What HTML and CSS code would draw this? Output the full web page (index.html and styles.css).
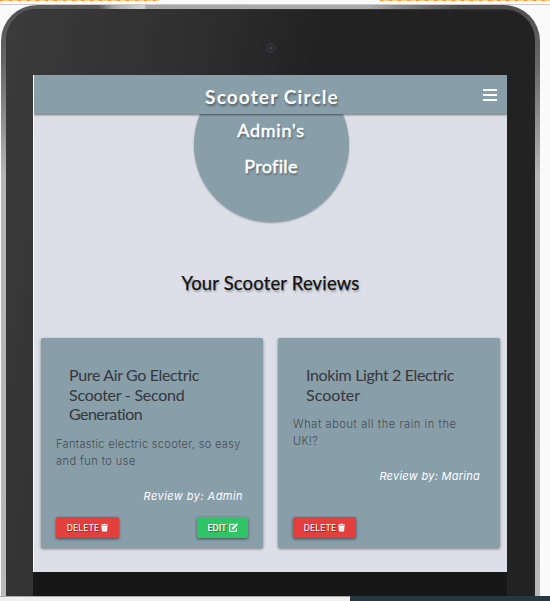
FILE: index.html
```html
<!DOCTYPE html>
<html lang="en">
<head>
<meta charset="utf-8">
<title>Scooter Circle</title>
<link rel="stylesheet" href="styles.css">
</head>
<body>
<div class="strip"><span class="dashes dashes-left"></span><span class="dashes dashes-right"></span></div>
<main class="stage">
  <div class="tablet">
    <div class="bezel">
      <div class="camera-row"><span class="camera"></span></div>
      <div class="screen">
        <header class="navbar">
          <h1 class="brand">Scooter Circle</h1>
          <svg class="menu" viewBox="0 0 14 12"><path d="M0 1h14M0 6h14M0 11h14" stroke="#fff" stroke-width="2"/></svg>
        </header>
        <div class="profile-wrap">
          <div class="profile"><span class="p1">Admin's</span><span class="p2">Profile</span></div>
        </div>
        <h2 class="heading">Your Scooter Reviews</h2>
        <section class="cards">
          <article class="card">
            <h3 class="title"><span class="t1">Pure Air Go Electric</span><br><span class="t2">Scooter - Second</span><br><span class="t3">Generation</span></h3>
            <p class="text"><span class="x1">Fantastic electric scooter, so easy</span><br><span class="x2">and fun to use</span></p>
            <p class="author a1">Review by: Admin</p>
            <div class="actions">
              <button class="btn delete"><span>DELETE</span><svg class="trash" viewBox="0 0 8 9"><path d="M0 1h2.4L3 .2h2l.6.8H8v1.2H0zM.6 2.7h6.8L7 8.2q0 .8-.8.8H1.8Q1 9 1 8.2z" fill="#fff"/><path d="M2.5 3.7v4M4 3.7v4M5.5 3.7v4" stroke="#e5a29f" stroke-width=".4"/></svg></button>
              <button class="btn edit"><span>EDIT</span><svg class="pen" viewBox="0 0 9 9"><path d="M5.2 1.3H1.3q-.7 0-.7.7v5.6q0 .7.7.7h5.4q.7 0 .7-.7V5.4" fill="none" stroke="#fff" stroke-width="1.2"/><path d="M2.7 6.6l.3-1.9L7.3.4q.4-.3.8 0l.6.6q.4.4 0 .8L4.5 6.2z" fill="#fff"/></svg></button>
            </div>
          </article>
          <article class="card">
            <h3 class="title"><span class="t4">Inokim Light 2 Electric</span><br><span class="t5">Scooter</span></h3>
            <p class="text"><span class="x3">What about all the rain in the</span><br><span class="x4">UK!?</span></p>
            <p class="author a2">Review by: Marina</p>
            <div class="actions">
              <button class="btn delete"><span>DELETE</span><svg class="trash" viewBox="0 0 8 9"><path d="M0 1h2.4L3 .2h2l.6.8H8v1.2H0zM.6 2.7h6.8L7 8.2q0 .8-.8.8H1.8Q1 9 1 8.2z" fill="#fff"/><path d="M2.5 3.7v4M4 3.7v4M5.5 3.7v4" stroke="#e5a29f" stroke-width=".4"/></svg></button>
            </div>
          </article>
        </section>
      </div>
      <div class="below"></div>
    </div>
  </div>
</main>
<footer class="bottom"><span class="bottom-light"></span><span class="bottom-dark"></span></footer>
</body>
</html>
```
FILE: styles.css
```css
* { box-sizing: border-box; }
body { margin: 0; width: 550px; height: 601px; overflow: hidden; display: flex; flex-direction: column; background: #fafafa; font-family: Lato, "Liberation Sans", sans-serif; font-variant-ligatures: none; }
h1, h2, h3, p { margin: 0; font-weight: 400; }
.strip { height: 5px; flex: none; display: flex; justify-content: space-between; border-bottom: 1px solid #c8c8c8; }
.dashes { height: 1px; background: repeating-linear-gradient(90deg, #ff8c32 0 3px, #ffcf8c 3px 9px); }
.dashes-left { width: 159px; }
.dashes-right { width: 170px; }
.stage { height: 591px; flex: none; overflow: hidden; padding-left: 1px; }
.tablet { width: 539px; height: 640px; padding: 4px 5px 0; border-radius: 36px 36px 0 0; background: linear-gradient(90deg, #5b5b5b 0 18%, #a8a8a8 21%, #d5d5d5 26.5%, #a8a8a8 27%, #aaa 68%, #505050 85%) top / 100% 5px no-repeat, linear-gradient(#505050, #686868 60px, #b5b5b5 170px, #b9b9b9); }
.bezel { height: 636px; padding: 0 27px 0 27px; border-radius: 31px 31px 0 0; border-top: 1px solid #333; background: linear-gradient(100deg, #3b3b3b, #303030 28%, #222 50%, #222); }
.camera-row { height: 65px; display: flex; justify-content: center; padding: 33px 0 0 1px; }
.camera { width: 10px; height: 10px; border-radius: 50%; border: 2px solid #34323b; background: radial-gradient(#454155 0 1px, #25252a 2px); }
.screen { width: 474px; height: 497px; overflow: hidden; background: #dcdfe7; border-left: 1px solid #fff; }
.navbar { position: relative; z-index: 1; height: 39px; background: #889ea9; display: grid; grid-template-columns: 40px 1fr 40px; align-items: center; box-shadow: 0 1px 2px rgba(0,0,0,.5); color: #fff; }
.brand { grid-column: 2; text-align: center; font-size: 19px; line-height: 24px; font-weight: 700; letter-spacing: 1.15px; padding: 5px 0 0 3px; text-shadow: 1px 2px 2px rgba(0,0,0,.4); }
.menu { width: 14px; height: 12px; margin-left: 16px; }
.profile-wrap { height: 108px; display: flex; justify-content: center; align-items: flex-end; padding-left: 1px; }
.profile { width: 155px; height: 155px; flex: none; border-radius: 50%; background: #889ea9; box-shadow: 0 1px 2px rgba(0,0,0,.35); color: #fff; font-size: 18px; font-weight: 400; -webkit-text-stroke: .5px #fff; line-height: 36px; text-align: center; padding-top: 45px; display: flex; flex-direction: column; text-shadow: 1px 2px 2px rgba(0,0,0,.4); }
.p1 { letter-spacing: .75px; }
.p2 { letter-spacing: .35px; }
.heading { height: 116px; padding-top: 48px; text-align: center; font-size: 18.5px; line-height: 26px; letter-spacing: .15px; color: #111; text-shadow: 1px 2px 2px rgba(0,0,0,.3); -webkit-text-stroke: .25px #111; }
.cards { display: grid; grid-template-columns: 222px 222px; gap: 15px; padding-left: 7px; }
.card { height: 210px; background: #889ea9; border-radius: 2px; box-shadow: 0 1px 3px rgba(0,0,0,.45); padding: 27px 15px 10px; display: flex; flex-direction: column; }
.title { padding-left: 13px; font-size: 16px; line-height: 19.7px; color: #36373d; white-space: nowrap; letter-spacing: -.35px; }
.t2 { letter-spacing: -.25px; }
.t3 { letter-spacing: -.55px; }
.t5 { letter-spacing: 0; }
.text { margin-top: 12px; font-family: Inter, sans-serif; font-weight: 300; font-size: 11px; line-height: 16.5px; color: #444c53; white-space: nowrap; letter-spacing: .33px; }
.x2 { letter-spacing: .45px; }
.x3 { letter-spacing: .6px; }
.author { margin-top: 19px; padding-right: 5px; text-align: right; font-family: Inter, sans-serif; font-style: italic; font-size: 11px; line-height: 16px; color: #fff; letter-spacing: .45px; }
.a2 { letter-spacing: .27px; }
.actions { margin-top: auto; display: flex; justify-content: space-between; }
.btn { height: 21px; border: 0; border-radius: 2px; padding: 0 9px; display: flex; align-items: center; justify-content: center; gap: 2px; color: #fff; font: 400 8.5px Inter, sans-serif; text-shadow: 1px 1px 1px rgba(0,0,0,.4); box-shadow: 0 1px 3px rgba(0,0,0,.55); }
.delete { width: 63px; background: #e3403d; letter-spacing: .15px; }
.edit { width: 51px; background: #2fc466; font-weight: 600; }
.trash { width: 7px; height: 9px; flex: none; }
.pen { width: 9px; height: 9px; flex: none; }
.below { width: 474px; height: 30px; background: #171717; }
.bottom { height: 5px; flex: none; display: flex; }
.bottom-light { width: 350px; background: #f0f0f0; border-top: 1px solid #aaa; }
.bottom-dark { flex: 1; background: #26383f; }
```
